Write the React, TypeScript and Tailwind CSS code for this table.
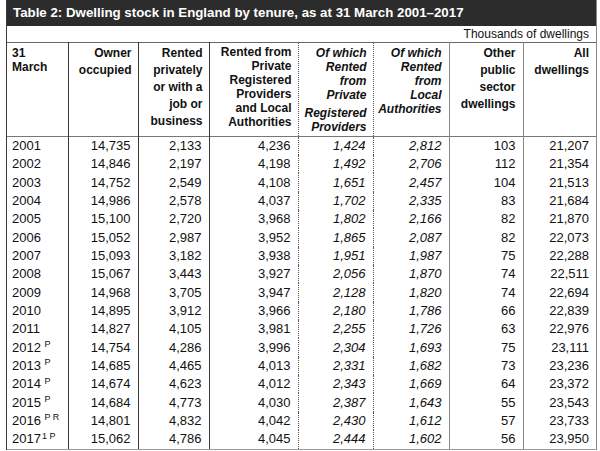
import React from 'react';

type Row = { year: string; sup?: string; v: string[] };

const ROWS: Row[] = [
  { year: '2001', v: ['14,735', '2,133', '4,236', '1,424', '2,812', '103', '21,207'] },
  { year: '2002', v: ['14,846', '2,197', '4,198', '1,492', '2,706', '112', '21,354'] },
  { year: '2003', v: ['14,752', '2,549', '4,108', '1,651', '2,457', '104', '21,513'] },
  { year: '2004', v: ['14,986', '2,578', '4,037', '1,702', '2,335', '83', '21,684'] },
  { year: '2005', v: ['15,100', '2,720', '3,968', '1,802', '2,166', '82', '21,870'] },
  { year: '2006', v: ['15,052', '2,987', '3,952', '1,865', '2,087', '82', '22,073'] },
  { year: '2007', v: ['15,093', '3,182', '3,938', '1,951', '1,987', '75', '22,288'] },
  { year: '2008', v: ['15,067', '3,443', '3,927', '2,056', '1,870', '74', '22,511'] },
  { year: '2009', v: ['14,968', '3,705', '3,947', '2,128', '1,820', '74', '22,694'] },
  { year: '2010', v: ['14,895', '3,912', '3,966', '2,180', '1,786', '66', '22,839'] },
  { year: '2011', v: ['14,827', '4,105', '3,981', '2,255', '1,726', '63', '22,976'] },
  { year: '2012', sup: ' P', v: ['14,754', '4,286', '3,996', '2,304', '1,693', '75', '23,111'] },
  { year: '2013', sup: ' P', v: ['14,685', '4,465', '4,013', '2,331', '1,682', '73', '23,236'] },
  { year: '2014', sup: ' P', v: ['14,674', '4,623', '4,012', '2,343', '1,669', '64', '23,372'] },
  { year: '2015', sup: ' P', v: ['14,684', '4,773', '4,030', '2,387', '1,643', '55', '23,543'] },
  { year: '2016', sup: ' P R', v: ['14,801', '4,832', '4,042', '2,430', '1,612', '57', '23,733'] },
  { year: '2017', sup: '1 P', v: ['15,062', '4,786', '4,045', '2,444', '1,602', '56', '23,950'] },
];

// right border of each value column (col 2..8)
const cellBorders = [
  'border-r border-r-[#3a3a3a]',
  'border-r border-r-[#3a3a3a]',
  'border-r border-dotted border-r-[#555]',
  'border-r border-dotted border-r-[#555]',
  'border-r border-r-[#8a8a8a]',
  'border-r border-r-[#8a8a8a]',
  '',
];

export default function App() {
  return (
    <div className="w-[600px] h-[451px] bg-white text-[#111]" style={{ fontFamily: '"Liberation Sans", Arial, sans-serif' }}>
      <div className="ml-[6px] w-[591px] border-r border-r-[#8a8a8a] border-l border-l-[#3a3a3a]">
        {/* Title bar */}
        <div className="h-[26px] bg-[#2c2c2c] pl-[6px] flex items-center text-white font-bold text-[13.3px]">
          Table 2: Dwelling stock in England by tenure, as at 31 March 2001–2017
        </div>
        <div className="h-[16px] flex items-center justify-end pr-[7px] text-[12px] leading-none">
          Thousands of dwellings
        </div>

        <table className="w-full border-collapse table-fixed">
          <colgroup>
            <col className="w-[61px]" />
            <col className="w-[70px]" />
            <col className="w-[71px]" />
            <col className="w-[89px]" />
            <col className="w-[75px]" />
            <col className="w-[76px]" />
            <col className="w-[74px]" />
            <col />
          </colgroup>
          <thead>
            <tr className="h-[94px] border-t border-t-[#666] border-b border-b-[#777] text-[12px] font-bold align-top">
              <th className="text-left font-bold pl-[5px] pt-[3px] leading-[14px] border-r border-r-[#3a3a3a]">
                <div>31</div>
                <div>March</div>
              </th>
              <th className="text-right font-bold pr-[6px] pt-[2px] leading-[17px] border-r border-r-[#3a3a3a]">
                <div>Owner</div>
                <div>occupied</div>
              </th>
              <th className="text-right font-bold pr-[6px] pt-[2px] leading-[17px] border-r border-r-[#3a3a3a]">
                <div>Rented</div>
                <div>privately</div>
                <div>or with a</div>
                <div>job or</div>
                <div>business</div>
              </th>
              <th className="text-right font-bold pr-[6px] pt-[2px] leading-[14px] border-r border-dotted border-r-[#555]">
                <div>Rented from</div>
                <div>Private</div>
                <div>Registered</div>
                <div>Providers</div>
                <div>and Local</div>
                <div>Authorities</div>
              </th>
              <th className="text-right font-bold italic pr-[6px] pt-[3px] leading-[14px] border-r border-dotted border-r-[#555]">
                <div>Of which</div>
                <div>Rented</div>
                <div>from</div>
                <div>Private</div>
                <div className="mt-[4px]">Registered</div>
                <div className="leading-[15px]">Providers</div>
              </th>
              <th className="text-right font-bold italic pr-[7px] pt-[3px] leading-[14px] border-r border-r-[#8a8a8a]">
                <div>Of which</div>
                <div>Rented</div>
                <div>from</div>
                <div>Local</div>
                <div>Authorities</div>
              </th>
              <th className="text-right font-bold pr-[7px] pt-[2px] leading-[17px] border-r border-r-[#8a8a8a]">
                <div>Other</div>
                <div>public</div>
                <div>sector</div>
                <div>dwellings</div>
              </th>
              <th className="text-right font-bold pr-[7px] pt-[2px] leading-[17px]">
                <div>All</div>
                <div>dwellings</div>
              </th>
            </tr>
          </thead>
          <tbody className="text-[13px]">
            {ROWS.map((r) => (
              <tr key={r.year} className="h-[18.35px]">
                <td className="pl-[5px] leading-[18px] border-r border-r-[#3a3a3a] whitespace-nowrap">
                  {r.year}
                  {r.sup && <sup className="text-[9px] ml-[1px] whitespace-pre">{r.sup}</sup>}
                </td>
                {r.v.map((val, i) => (
                  <td
                    key={i}
                    className={`text-right pr-[7px] leading-[18px] ${i === 3 || i === 4 ? 'italic' : ''} ${cellBorders[i]}`}
                  >
                    {val}
                  </td>
                ))}
              </tr>
            ))}
          </tbody>
        </table>
        <div className="border-t border-t-[#9a9a9a]" />
      </div>
    </div>
  );
}
